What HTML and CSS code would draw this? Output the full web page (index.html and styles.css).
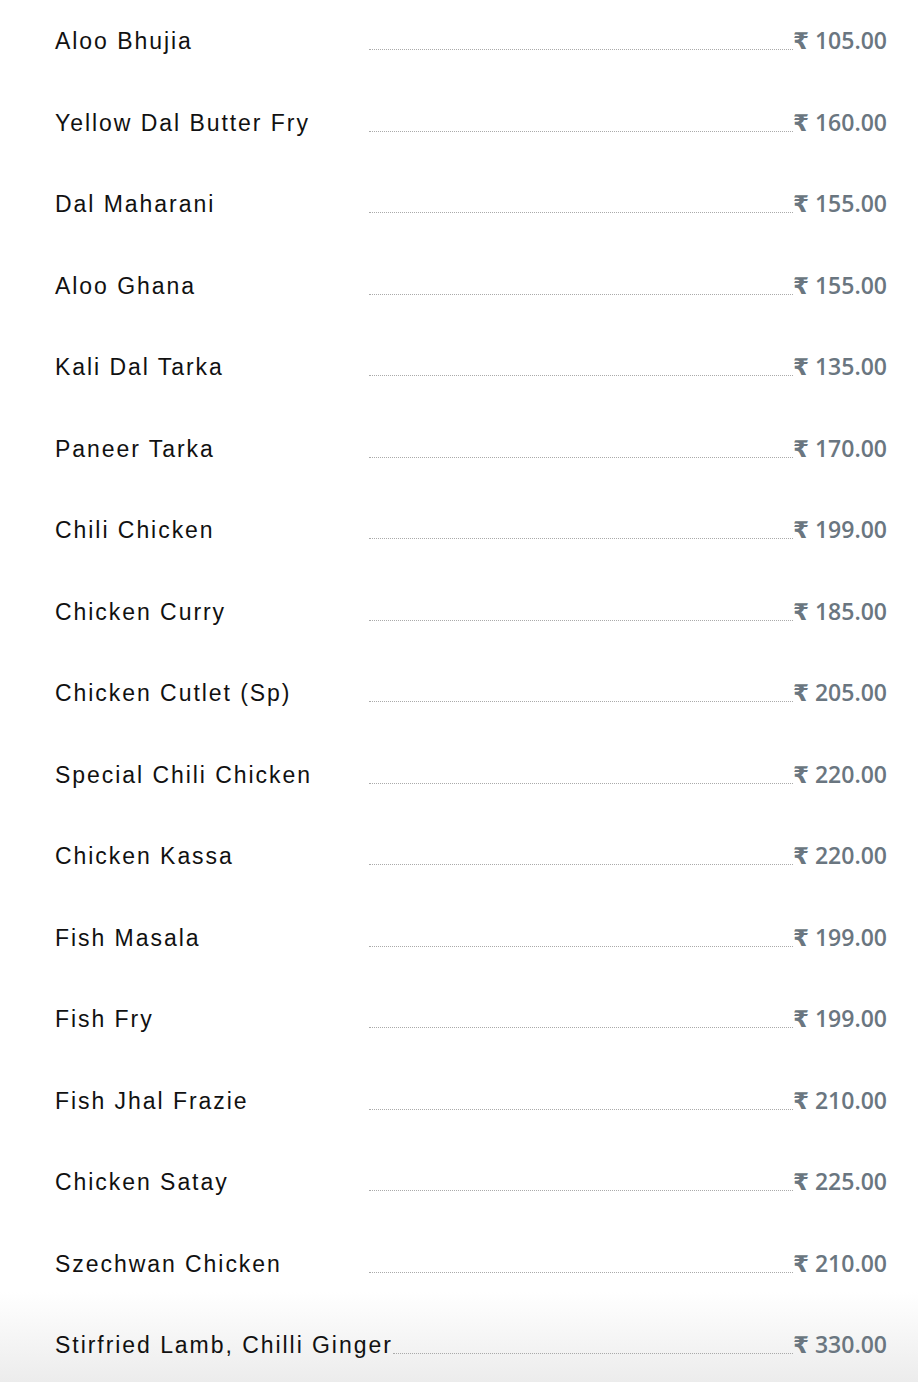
FILE: index.html
```html
<!DOCTYPE html>
<html lang="en">
<head>
    <meta charset="UTF-8">
    <meta name="viewport" content="width=device-width, initial-scale=1.0">
    <title>Menu</title>
    <link rel="stylesheet" href="styles.css">
</head>
<body>

<div class="menu-list">
    <div class="menu-item"><span class="item-name">Aloo Bhujia</span><span class="dots"></span><span class="item-price"><span class="rupee">₹</span> 105.00</span></div>
    <div class="menu-item"><span class="item-name">Yellow Dal Butter Fry</span><span class="dots"></span><span class="item-price"><span class="rupee">₹</span> 160.00</span></div>
    <div class="menu-item"><span class="item-name">Dal Maharani</span><span class="dots"></span><span class="item-price"><span class="rupee">₹</span> 155.00</span></div>
    <div class="menu-item"><span class="item-name">Aloo Ghana</span><span class="dots"></span><span class="item-price"><span class="rupee">₹</span> 155.00</span></div>
    <div class="menu-item"><span class="item-name">Kali Dal Tarka</span><span class="dots"></span><span class="item-price"><span class="rupee">₹</span> 135.00</span></div>
    <div class="menu-item"><span class="item-name">Paneer Tarka</span><span class="dots"></span><span class="item-price"><span class="rupee">₹</span> 170.00</span></div>
    <div class="menu-item"><span class="item-name">Chili Chicken</span><span class="dots"></span><span class="item-price"><span class="rupee">₹</span> 199.00</span></div>
    <div class="menu-item"><span class="item-name">Chicken Curry</span><span class="dots"></span><span class="item-price"><span class="rupee">₹</span> 185.00</span></div>
    <div class="menu-item"><span class="item-name">Chicken Cutlet (Sp)</span><span class="dots"></span><span class="item-price"><span class="rupee">₹</span> 205.00</span></div>
    <div class="menu-item"><span class="item-name">Special Chili Chicken</span><span class="dots"></span><span class="item-price"><span class="rupee">₹</span> 220.00</span></div>
    <div class="menu-item"><span class="item-name">Chicken Kassa</span><span class="dots"></span><span class="item-price"><span class="rupee">₹</span> 220.00</span></div>
    <div class="menu-item"><span class="item-name">Fish Masala</span><span class="dots"></span><span class="item-price"><span class="rupee">₹</span> 199.00</span></div>
    <div class="menu-item"><span class="item-name">Fish Fry</span><span class="dots"></span><span class="item-price"><span class="rupee">₹</span> 199.00</span></div>
    <div class="menu-item"><span class="item-name">Fish Jhal Frazie</span><span class="dots"></span><span class="item-price"><span class="rupee">₹</span> 210.00</span></div>
    <div class="menu-item"><span class="item-name">Chicken Satay</span><span class="dots"></span><span class="item-price"><span class="rupee">₹</span> 225.00</span></div>
    <div class="menu-item"><span class="item-name">Szechwan Chicken</span><span class="dots"></span><span class="item-price"><span class="rupee">₹</span> 210.00</span></div>
    <div class="menu-item"><span class="item-name">Stirfried Lamb, Chilli Ginger</span><span class="dots"></span><span class="item-price"><span class="rupee">₹</span> 330.00</span></div>
</div>

</body>
</html>
```

FILE: styles.css
```css
html {
    height: 100%;
}
body {
    margin: 0;
    min-height: 100%;
    font-family: "Liberation Sans", Arial, sans-serif;
    background: linear-gradient(to bottom, #fff 0, #fff calc(100% - 90px), #ececec 100%);
}
.menu-list {
    padding: 24px 31px 0 55px;
}
.menu-item {
    display: flex;
    align-items: baseline;
    height: 81.5px;
}
.item-name {
    min-width: 314px;
    font-size: 23px;
    letter-spacing: 1.95px;
    color: #111;
}
.dots {
    flex: 1;
    border-bottom: 1px dotted #aaa;
    transform: translateY(1px);
}
.item-price {
    font-family: "Open Sans", sans-serif;
    font-weight: 600;
    font-size: 23px;
    color: #6a7680;
}
.rupee {
    font-family: "DejaVu Sans", sans-serif;
    font-weight: 700;
    font-size: 23px;
}
```
